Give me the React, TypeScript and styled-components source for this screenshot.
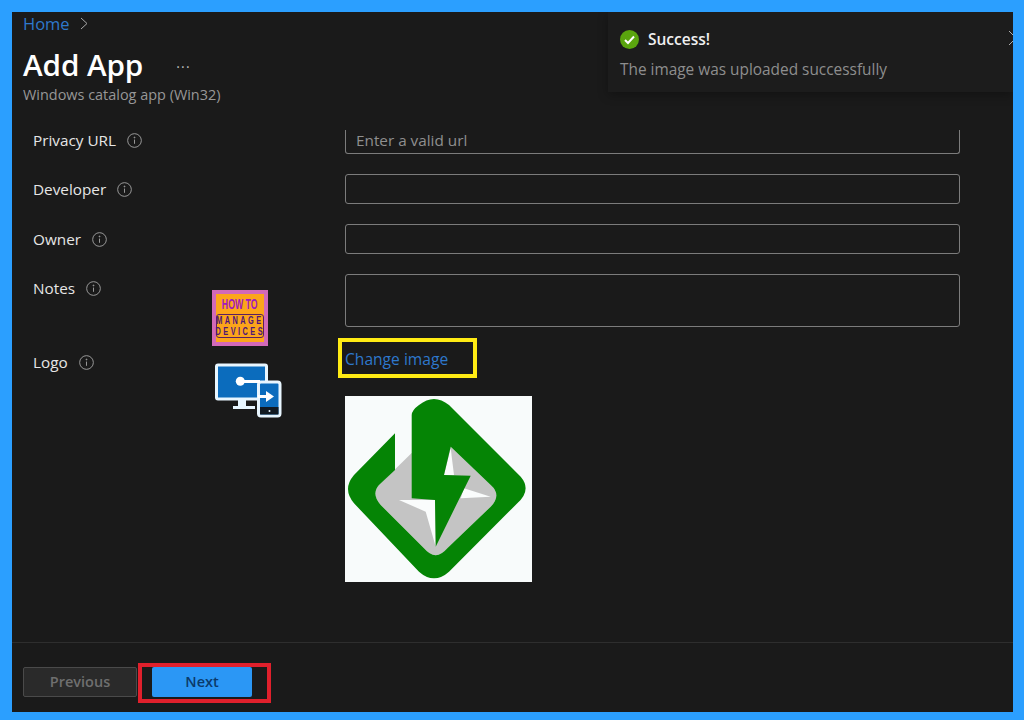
import React from "react";
import styled, { createGlobalStyle } from "styled-components";

const Global = createGlobalStyle`
  html, body { margin: 0; padding: 0; background: #2b9fff; }
  body { font-family: "Open Sans", "Noto Sans", sans-serif; }
  * { box-sizing: border-box; }
`;

const Frame = styled.div`
  width: 1024px; height: 720px; padding: 12px 11px 8px 12px; background: #2b9fff; overflow: hidden;
`;
const Panel = styled.main`
  position: relative; width: 1001px; height: 700px; background: #1a1a1a;
  display: flex; flex-direction: column; color: #f0f0f0; overflow: hidden;
`;
const Header = styled.header`
  height: 118px; padding: 0 0 0 11px; display: flex; flex-direction: column; flex: none;
`;
const Crumbs = styled.nav`
  height: 22px; display: flex; align-items: center; gap: 10px; font-size: 16.5px; color: #2e78cc;
`;
const TitleRow = styled.div`
  height: 41px; margin-top: 10px; display: flex; align-items: center;
`;
const Title = styled.h1`
  margin: 0; font-size: 29.7px; line-height: 36px; font-weight: 600; color: #fff; letter-spacing: -0.1px;
`;
const More = styled.span`
  margin-left: 33px; font-size: 14px; letter-spacing: 1.2px; line-height: 12px; color: #bdbdbd; margin-top: -4px;
`;
const Sub = styled.div`
  margin-top: 1px; font-size: 14.45px; line-height: 17px; color: #979797;
`;
const Form = styled.section`
  flex: 1; padding-left: 21px; display: grid; grid-template-columns: 312px 615px;
  grid-template-rows: 24px 30px 30px 53px auto auto; row-gap: 20px; align-content: start;
`;
const Label = styled.label<{ $top: number }>`
  display: flex; align-items: flex-start; gap: 11px; font-size: 15.3px; line-height: 20px; color: #e6e6e6;
  padding-top: ${(p) => p.$top}px;
`;
const Info = styled.svg`
  width: 15px; height: 15px; flex: none; margin-top: 3px; color: #a0a0a0;
`;
const Input = styled.div<{ $cut?: boolean }>`
  border: 1.5px solid #7c7c7c; border-top-width: ${(p) => (p.$cut ? 0 : 1.5)}px; border-radius: 3px;
  ${(p) => (p.$cut ? "border-top-left-radius: 0; border-top-right-radius: 0; padding-bottom: 3px;" : "")}
  padding-left: 10px; padding-right: 10px; font-size: 15.3px; line-height: 20px; color: #8f8f8f; display: flex; align-items: center;
  background: #1a1a1a;
`;
const ChangeCell = styled.div`
  margin: -9px 0 0 -7px;
`;
const Highlight = styled.div`
  width: 139px; height: 40px; border: 4px solid #ffeb14; padding: 2px 0 0 3px; display: flex; align-items: center;
`;
const Link = styled.a`
  font-size: 15.6px; color: #2e78cc; white-space: nowrap;
`;
const Picture = styled.div`
  grid-column: 2; width: 187px; height: 186px; margin-top: -2px; background: #f8fbfb; display: flex;
  align-items: center; justify-content: center;
`;
const LogoSvg = styled.svg`
  width: 187px; height: 186px; display: block;
`;
const Footer = styled.footer`
  height: 70px; flex: none; border-top: 1px solid #2e2e2e; padding: 20px 0 0 11px; display: flex; align-items: flex-start;
`;
const PrevButton = styled.button`
  width: 114px; height: 30px; margin-top: 4px; border: 1px solid #4a4a4a; border-radius: 2px; background: #2a2a2a;
  color: #6f6f6f; font: 600 14.5px "Open Sans", sans-serif; padding: 0 0 2px;
`;
const RedBox = styled.div`
  width: 133px; height: 40px; margin-left: 1px; border: 4px solid #e0202c; padding-left: 10px;
`;
const NextButton = styled.button`
  width: 100px; height: 30px; border: 0; border-radius: 2px; background: #2b97f5;
  color: #0b3a6b; font: 600 14.5px "Open Sans", sans-serif; padding: 0 0 2px;
`;
const Toast = styled.aside`
  position: absolute; top: 0; right: 0; width: 405px; height: 80px; background: #1c1c1c;
  box-shadow: 0 3px 10px rgba(0,0,0,.3); padding: 17px 0 0 12px;
`;
const ToastHead = styled.div`
  display: flex; align-items: center; gap: 9px; font-size: 15.5px; font-weight: 600; line-height: 20px; color: #f0f0f0;
`;
const ToastText = styled.div`
  margin-top: 11px; font-size: 15.4px; line-height: 20px; color: #8e8e8e;
`;
const ToastClose = styled.svg`
  position: absolute; right: -5px; top: 18px; width: 10px; height: 16px; color: #b0b0b0;
`;
const Badge = styled.div`
  position: absolute; left: 200px; top: 278px; width: 56px; height: 56px; background: #d269b8; padding: 4px;
`;
const BadgeInner = styled.div`
  width: 100%; height: 100%; background: #fca51a; display: flex; flex-direction: column; align-items: center;
  color: #a018c0; font-family: "Liberation Sans", sans-serif; font-weight: 700;
`;
const BadgeTop = styled.div`
  font-size: 14.5px; line-height: 13px; margin-top: 4px; transform: scaleX(.6); white-space: nowrap;
`;
const BadgeBox = styled.div`
  width: 48px; height: 24px; margin-top: 3px; border: 1px solid #5c1f60; border-radius: 3px; padding-top: 0;
  display: flex; flex-direction: column; align-items: center; color: #4f1678;
`;
const BadgeLine = styled.div`
  font-size: 10.5px; line-height: 11px; letter-spacing: 3.5px; transform: scaleX(.7); white-space: nowrap;
`;
const Monitor = styled.svg`
  position: absolute; left: 202px; top: 350px; width: 70px; height: 56px;
`;

const InfoIcon = () => (
  <Info viewBox="0 0 16 16" fill="none" stroke="currentColor">
    <circle cx="8" cy="8" r="7.300" />
    <path d="M8 7v4.500" />
    <circle cx="8" cy="4.800" r=".5" fill="currentColor" />
  </Info>
);

const Field = ({ name, top }: { name: string; top: number }) => (
  <Label $top={top}>
    {name}
    <InfoIcon />
  </Label>
);

export default function App() {
  return (
    <Frame>
      <Global />
      <Panel>
        <Header>
          <Crumbs>
            Home
            <svg width="8" height="13" viewBox="0 0 8 13" fill="none" stroke="#a8a8a8"><path d="M1 1l6 5.500L1 12" /></svg>
          </Crumbs>
          <TitleRow>
            <Title>Add App</Title>
            <More>...</More>
          </TitleRow>
          <Sub>Windows catalog app (Win32)</Sub>
        </Header>
        <Form>
          <Field name="Privacy URL" top={0} />
          <Input $cut>Enter a valid url</Input>
          <Field name="Developer" top={5} />
          <Input />
          <Field name="Owner" top={5} />
          <Input />
          <Field name="Notes" top={4} />
          <Input />
          <Field name="Logo" top={5} />
          <ChangeCell>
            <Highlight><Link>Change image</Link></Highlight>
          </ChangeCell>
          <Picture>
            <LogoSvg viewBox="0 0 187 186">
              <path fill="#c4c4c4" d="M34 89 L66.700 57 L105.700 50.700 L145.700 89 Q157 99 145.700 110.700 L102.300 152.300 Q90.700 166 79 152.300 L35.700 109 Q26 98 34 89 Z" />
              <path fill="#fafcfc" d="M105.700 52.300 L99 79 L109 79 Z" />
              <path fill="#fafcfc" d="M54 104 L90 104 L90.700 150.700 L80.700 115.700 Z" />
              <path fill="#fafcfc" d="M119 92.300 L145.700 100.700 L115.700 102.300 Z" />
              <path fill="#058405" d="M74 9 Q89 -3 104 9 L175.700 80.700 Q187 94 172.300 107.300 L104 175.700 Q89 189 74 175.700 L9 107.300 Q-3 93 9 79 L50 37.300 L50 74 L34 89 Q26 98 35.700 109 L79 152.300 Q90.700 166 102.300 152.300 L145.700 110.700 Q157 99 145.700 89 L105.700 50.700 L99 79 L125.700 79.700 L90.700 150.700 L90 104 L66.700 102.300 L66.700 19 Q67 14 74 9 Z" />
            </LogoSvg>
          </Picture>
        </Form>
        <Footer>
          <PrevButton>Previous</PrevButton>
          <RedBox><NextButton>Next</NextButton></RedBox>
        </Footer>
        <Toast>
          <ToastHead>
            <svg width="19" height="19" viewBox="0 0 19 19"><circle cx="9.500" cy="9.500" r="9.500" fill="#5aa50e" /><path d="M5 10l3 3 6-6.500" fill="none" stroke="#fff" strokeWidth="2" /></svg>
            Success!
          </ToastHead>
          <ToastText>The image was uploaded successfully</ToastText>
          <ToastClose viewBox="0 0 10 16" fill="none" stroke="currentColor"><path d="M1 1l7 7-7 7" /></ToastClose>
        </Toast>
        <Badge>
          <BadgeInner>
            <BadgeTop>HOW TO</BadgeTop>
            <BadgeBox>
              <BadgeLine>MANAGE</BadgeLine>
              <BadgeLine>DEVICES</BadgeLine>
            </BadgeBox>
          </BadgeInner>
        </Badge>
        <Monitor viewBox="0 0 70 56" fill="none">
          <rect x="2.500" y="3" width="50" height="34" rx="1.500" fill="#0b6cbd" stroke="#e8f6ff" strokeWidth="3" />
          <path d="M24 37h8v7h9v3H19v-3h5z" fill="#e8f6ff" />
          <rect x="44.500" y="20" width="21.500" height="34" rx="2.500" fill="#0b6cbd" stroke="#e8f6ff" strokeWidth="3" />
          <rect x="46" y="45" width="18.500" height="7.500" fill="#111a22" />
          <circle cx="55.500" cy="49" r="1" fill="#e8f6ff" />
          <circle cx="26.300" cy="19.300" r="4.500" fill="#fff" />
          <path d="M26 19.500h20" stroke="#fff" strokeWidth="3" />
          <path d="M44 34.500h10" stroke="#fff" strokeWidth="3" />
          <path d="M52 29l8 5.500-8 5.500z" fill="#fff" />
        </Monitor>
      </Panel>
    </Frame>
  );
}
